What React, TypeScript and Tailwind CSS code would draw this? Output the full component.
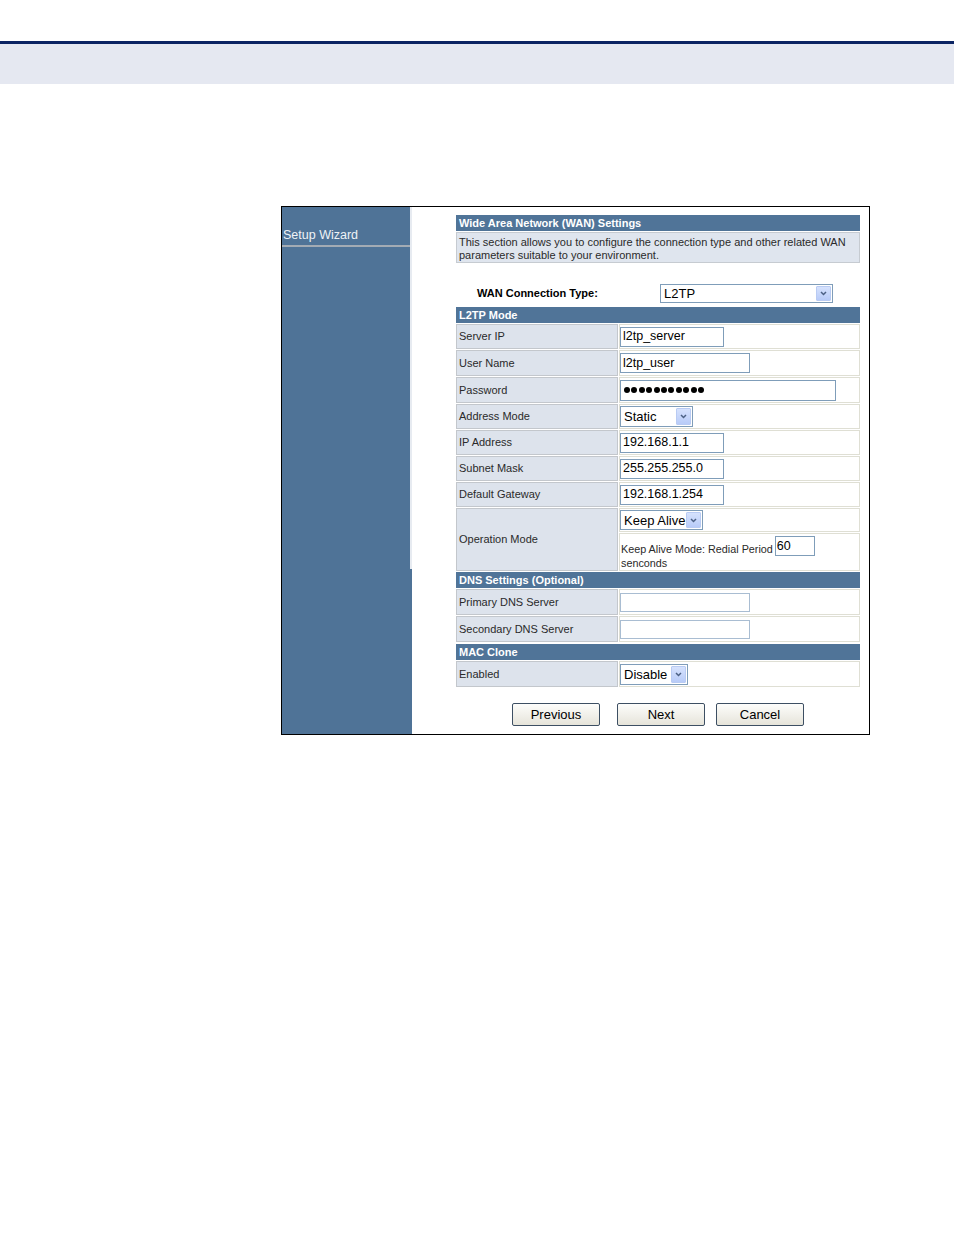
import React from "react";

const Chevron = () => (
  <svg width="7" height="5" viewBox="0 0 7 5">
    <path d="M1 1 L3.5 3.5 L6 1" fill="none" stroke="#4d6185" strokeWidth="1.5" />
  </svg>
);

function Select({ w, h, text }: { w: string; h: string; text: string }) {
  return (
    <div className={`flex shrink-0 ${w} ${h} border border-[#7f9db9] bg-white`}>
      <span className="flex flex-1 items-center whitespace-nowrap pl-[3px] text-[13px] leading-none text-black">{text}</span>
      <span className="m-[1px] flex w-[15px] shrink-0 items-center justify-center rounded-[1px] border border-[#b9cbf3] bg-gradient-to-b from-[#d6e2fd] to-[#b8cbf8]">
        <Chevron />
      </span>
    </div>
  );
}

function Input({ w, value }: { w: string; value?: string }) {
  return (
    <div className={`flex h-[20px] ${w} items-center border border-[#7f9db9] bg-white pl-[2px] text-[12.5px] leading-none text-black`}>
      {value}
    </div>
  );
}

function Row({ label, h, children }: { label: string; h: string; children?: React.ReactNode }) {
  return (
    <div className={`flex ${h} gap-[1px]`}>
      <div className="flex w-[162px] items-center border border-[#c3c7cc] bg-[#dde3ec] pl-[2px] text-[11px] text-[#2a2a2a]">
        {label}
      </div>
      <div className="flex flex-1 items-center border border-[#dfdfd4] bg-white">{children}</div>
    </div>
  );
}

function Header({ text, extra }: { text: string; extra?: string }) {
  return (
    <div className={`flex h-[16px] items-center bg-[#507498] pl-[3px] text-[11px] font-bold text-white ${extra ?? ""}`}>
      {text}
    </div>
  );
}

function Button({ text }: { text: string }) {
  return (
    <div className="flex h-[23px] w-[88px] items-center justify-center rounded-[2px] border border-[#3d4f63] bg-gradient-to-b from-[#fdfdfb] to-[#e6e4da] text-[13px] text-black">
      {text}
    </div>
  );
}

export default function App() {
  return (
    <div className="h-[1235px] w-[954px] bg-white font-['Liberation_Sans',Arial,sans-serif]">
      <div className="h-[41px]" />
      <div className="h-[3px] bg-[#0b2463]" />
      <div className="h-[40px] bg-[#e5e8f1]" />
      <div className="ml-[281px] mt-[122px] flex h-[529px] w-[589px] border border-black">
        {/* sidebar */}
        <div className="flex w-[130px] flex-col">
          <div className="flex h-[362px]">
            <div className="w-[128px] bg-[#4f7397]">
              <div className="flex h-[38px] items-end pb-[4px] pl-[1px] text-[12.5px] leading-none text-[#eef2f6]">
                Setup Wizard
              </div>
              <div className="h-[2px] bg-[#a3abb4]" />
            </div>
            <div className="w-[2px] bg-[#e7ebf1]" />
          </div>
          <div className="flex-1 bg-[#4f7397]" />
        </div>
        {/* content */}
        <div className="flex-1 pl-[44px] pt-[8px]">
          <div className="w-[404px]">
            <Header text="Wide Area Network (WAN) Settings" />
            <div className="mt-[1px] h-[31px] border border-[#c6cbd1] bg-[#dfe5ee] pl-[2px] pt-[3px] text-[11px] leading-[13px] text-[#2a2a2a]">
              This section allows you to configure the connection type and other related WAN
              <br />
              parameters suitable to your environment.
            </div>
            <div className="mt-[21px] flex h-[19px] items-center">
              <div className="w-[204px] shrink-0 pl-[21px] text-[11px] font-bold text-black">
                WAN Connection Type:
              </div>
              <Select w="w-[173px]" h="h-[19px]" text="L2TP" />
            </div>
            <div className="mt-[4px] flex flex-col gap-[1px]">
              <Header text="L2TP Mode" />
              <Row label="Server IP" h="h-[25px]">
                <Input w="w-[104px]" value="l2tp_server" />
              </Row>
              <Row label="User Name" h="h-[26px]">
                <Input w="w-[130px]" value="l2tp_user" />
              </Row>
              <Row label="Password" h="h-[26px]">
                <div className="flex h-[21px] w-[216px] items-center gap-[1.4px] border border-[#7f9db9] bg-white pl-[3px]">
                  {Array.from({ length: 11 }).map((_, i) => (
                    <span key={i} className="h-[6px] w-[6px] rounded-full bg-black" />
                  ))}
                </div>
              </Row>
              <Row label="Address Mode" h="h-[25px]">
                <Select w="w-[73px]" h="h-[21px]" text="Static" />
              </Row>
              <Row label="IP Address" h="h-[25px]">
                <Input w="w-[104px]" value="192.168.1.1" />
              </Row>
              <Row label="Subnet Mask" h="h-[25px]">
                <Input w="w-[104px]" value="255.255.255.0" />
              </Row>
              <Row label="Default Gateway" h="h-[25px]">
                <Input w="w-[104px]" value="192.168.1.254" />
              </Row>
              <div className="flex h-[63px] gap-[1px]">
                <div className="flex w-[162px] items-center border border-[#c3c7cc] bg-[#dde3ec] pl-[2px] text-[11px] text-[#2a2a2a]">
                  Operation Mode
                </div>
                <div className="flex flex-1 flex-col gap-[1px]">
                  <div className="flex h-[24px] items-center border border-[#dfdfd4] bg-white">
                    <Select w="w-[83px]" h="h-[20px]" text="Keep Alive" />
                  </div>
                  <div className="flex-1 border border-[#dfdfd4] bg-white pl-[1px] pt-[2px] text-[10.8px] leading-[14px] text-[#2a2a2a]">
                    <div className="flex items-end">
                      <span className="whitespace-nowrap">Keep Alive Mode: Redial Period</span>
                      <div className="ml-[2px] flex h-[20px] w-[40px] items-center border border-[#7f9db9] bg-white pl-[1px] text-[12.5px] leading-none text-black">
                        60
                      </div>
                    </div>
                    <div>senconds</div>
                  </div>
                </div>
              </div>
              <Header text="DNS Settings (Optional)" />
              <Row label="Primary DNS Server" h="h-[26px]">
                <div className="h-[19px] w-[130px] border border-[#a9bdd2] bg-white" />
              </Row>
              <Row label="Secondary DNS Server" h="h-[26px]">
                <div className="h-[19px] w-[130px] border border-[#a9bdd2] bg-white" />
              </Row>
              <Header text="MAC Clone" extra="mt-[1px]" />
              <Row label="Enabled" h="h-[26px]">
                <Select w="w-[68px]" h="h-[21px]" text="Disable" />
              </Row>
            </div>
            <div className="mt-[16px] flex justify-center">
              <Button text="Previous" />
              <div className="ml-[17px]">
                <Button text="Next" />
              </div>
              <div className="ml-[11px]">
                <Button text="Cancel" />
              </div>
            </div>
          </div>
        </div>
      </div>
    </div>
  );
}
